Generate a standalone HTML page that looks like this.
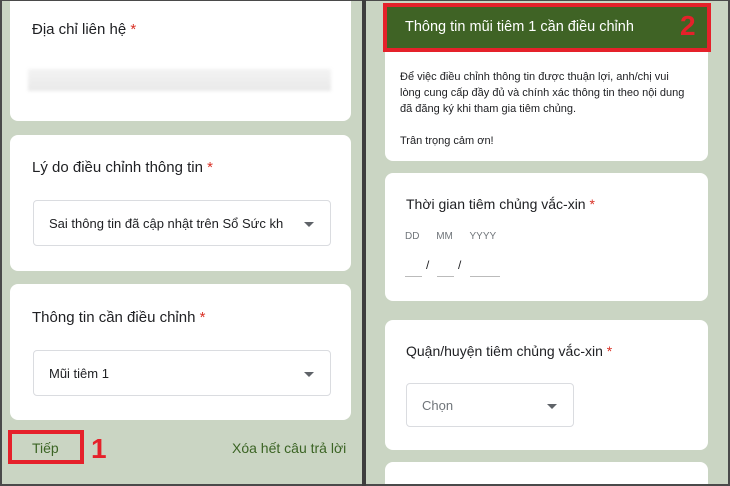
<!DOCTYPE html>
<html style="overflow:hidden;width:730px;height:486px"><head><meta charset="utf-8"><style>
*{margin:0;padding:0;box-sizing:border-box}
body{width:730px;height:486px;overflow:hidden;background:#cad5c3;font-family:"Liberation Sans",sans-serif;position:relative;color:#202124}
.a{position:absolute}
.card{position:absolute;background:#fff;border-radius:8px}
.q{position:absolute;font-size:15px;color:#202124}
.q b{color:#d93025;font-weight:normal}
.sel{position:absolute;border:1px solid #dadce0;border-radius:4px;background:#fff;font-size:13px}
.tri{position:absolute;width:0;height:0;border-left:5px solid transparent;border-right:5px solid transparent;border-top:5px solid #5f6368}
</style></head><body>
<div class="card" style="left:10px;top:-8px;width:341px;height:129px"></div>
<div class="q" style="left:32px;top:21px">Địa chỉ liên hệ <b>*</b></div>
<div class="a" style="left:28px;top:69px;width:303px;height:22px;background:linear-gradient(#f3f3f3,#e9e9e9);filter:blur(1.5px)"></div>

<div class="card" style="left:10px;top:135px;width:341px;height:136px"></div>
<div class="q" style="left:32px;top:159px">Lý do điều chỉnh thông tin <b>*</b></div>
<div class="sel" style="left:33px;top:200px;width:298px;height:46px"><span class="a" style="left:15px;top:15px">Sai thông tin đã cập nhật trên Sổ Sức kh</span><span class="tri" style="left:270px;top:21px"></span></div>

<div class="card" style="left:10px;top:284px;width:341px;height:136px"></div>
<div class="q" style="left:32px;top:309px">Thông tin cần điều chỉnh <b>*</b></div>
<div class="sel" style="left:33px;top:350px;width:298px;height:46px"><span class="a" style="left:15px;top:15px">Mũi tiêm 1</span><span class="tri" style="left:270px;top:21px"></span></div>

<div class="a" style="left:8px;top:430px;width:76px;height:34px;border:4px solid #e5212a"></div>
<div class="a" style="left:32px;top:440px;font-size:14px;color:#3b6424">Tiếp</div>
<div class="a" style="left:91px;top:433px;font-size:28px;font-weight:bold;color:#e5212a">1</div>
<div class="a" style="left:232px;top:440px;font-size:14px;color:#3b6424">Xóa hết câu trả lời</div>

<div class="card" style="left:385px;top:3px;width:323px;height:158px"></div>
<div class="a" style="left:383px;top:3px;width:328px;height:49px;background:#3f6325;border:4px solid #e5212a"></div>
<div class="a" style="left:405px;top:19px;font-size:14.5px;color:#fff">Thông tin mũi tiêm 1 cần điều chỉnh</div>
<div class="a" style="left:680px;top:10px;font-size:28px;font-weight:bold;color:#e5212a">2</div>
<div class="a" style="left:400px;top:69px;font-size:11px;line-height:16px;color:#202124">Để việc điều chỉnh thông tin được thuận lợi, anh/chị vui<br>lòng cung cấp đầy đủ và chính xác thông tin theo nội dung<br>đã đăng ký khi tham gia tiêm chủng.<br><br>Trân trọng cảm ơn!</div>

<div class="card" style="left:385px;top:173px;width:323px;height:128px"></div>
<div class="q" style="left:406px;top:196px;font-size:14px">Thời gian tiêm chủng vắc-xin <b>*</b></div>
<div class="a" style="left:405px;top:231px;font-size:10px;color:#70757a;word-spacing:14px">DD MM YYYY</div>
<div class="a" style="left:405px;top:276px;width:17px;height:1px;background:#bbb"></div>
<div class="a" style="left:437px;top:276px;width:17px;height:1px;background:#bbb"></div>
<div class="a" style="left:470px;top:276px;width:30px;height:1px;background:#bbb"></div>
<div class="a" style="left:426px;top:258px;font-size:12px">/</div>
<div class="a" style="left:458px;top:258px;font-size:12px">/</div>

<div class="card" style="left:385px;top:320px;width:323px;height:130px"></div>
<div class="q" style="left:406px;top:343px;font-size:14px">Quận/huyện tiêm chủng vắc-xin <b>*</b></div>
<div class="sel" style="left:406px;top:383px;width:168px;height:44px"><span class="a" style="left:15px;top:14px;color:#70757a">Chọn</span><span class="tri" style="left:140px;top:20px"></span></div>

<div class="card" style="left:385px;top:462px;width:323px;height:24px;border-radius:8px 8px 0 0"></div>

<div class="a" style="left:0;top:0;width:730px;height:486px;border:2px solid #4a4a4a;border-top-width:1px"></div>
<div class="a" style="left:362px;top:0;width:4px;height:486px;background:#3e3e3e"></div>
</body></html>
